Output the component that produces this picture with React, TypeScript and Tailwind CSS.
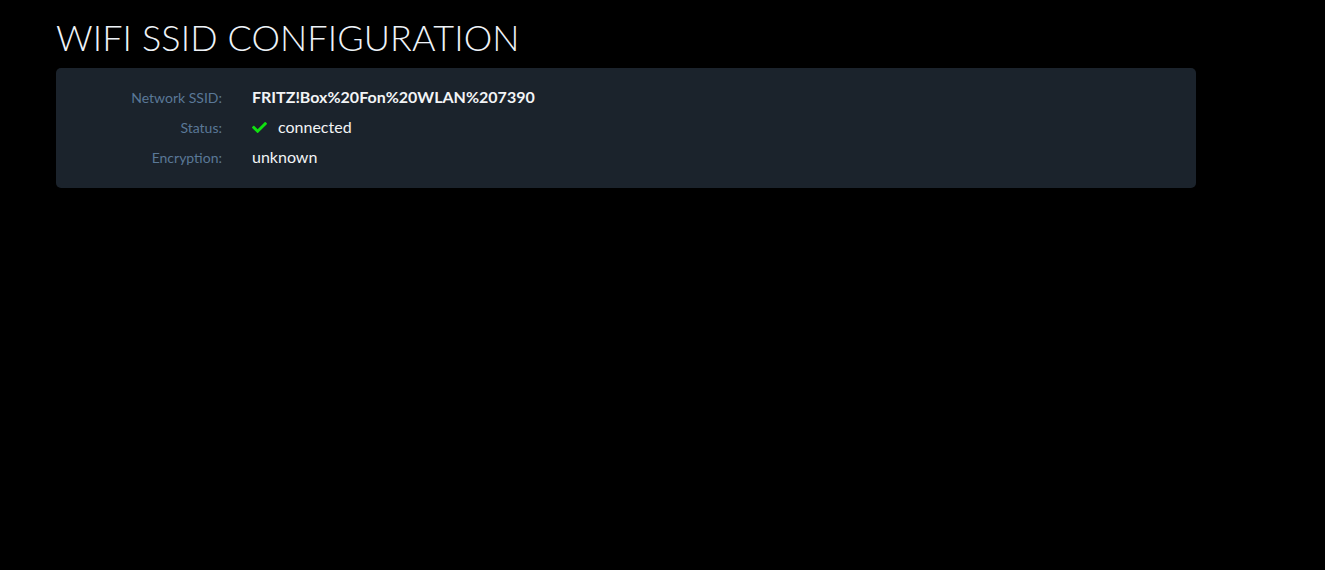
import { FaCheck } from "react-icons/fa";

const rows = [
  { label: "Network SSID:", value: "FRITZ!Box%20Fon%20WLAN%207390", bold: true },
  { label: "Status:", value: "connected", ok: true },
  { label: "Encryption:", value: "unknown" },
];

export default function App() {
  return (
    <div className="min-h-[570px] w-full bg-black font-['Lato',sans-serif] px-[56px] pt-[14px]">
      <h1 className="text-[36px] leading-[46px] font-light text-[#eef3f8] tracking-[0.1px]">
        WIFI SSID CONFIGURATION
      </h1>
      <div className="mt-[8px] w-[1140px] rounded-[5px] bg-[#1b232c] pt-[14px] pb-[16px]">
        {rows.map((r) => (
          <div key={r.label} className="flex h-[30px] items-center">
            <div className="w-[166px] text-right text-[14px] text-[#5a7897]">{r.label}</div>
            <div
              className={`ml-[30px] flex items-center text-[16px] text-[#f2f4f6] ${
                r.bold ? "font-bold" : ""
              }`}
            >
              {r.ok && <FaCheck className="mr-[11px] text-[15px] text-[#10e010]" />}
              {r.value}
            </div>
          </div>
        ))}
      </div>
    </div>
  );
}
